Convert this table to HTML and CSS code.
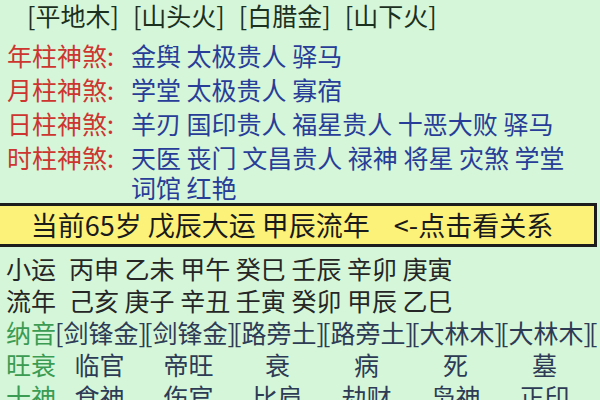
FILE: index.html
```html
<!DOCTYPE html>
<html lang="zh-CN">
<head>
<meta charset="utf-8">
<link rel="stylesheet" href="styles.css">
</head>
<body>
<div class="page">
  <div class="top-nayin">
    <span>[平地木]</span><span>[山头火]</span><span>[白腊金]</span><span>[山下火]</span>
  </div>
  <div class="shensha">
    <div class="ss-row"><span class="ss-label">年柱神煞:</span><span class="ss-vals">金舆 太极贵人 驿马</span></div>
    <div class="ss-row"><span class="ss-label">月柱神煞:</span><span class="ss-vals">学堂 太极贵人 寡宿</span></div>
    <div class="ss-row"><span class="ss-label">日柱神煞:</span><span class="ss-vals">羊刃 国印贵人 福星贵人 十恶大败 驿马</span></div>
    <div class="ss-row"><span class="ss-label">时柱神煞:</span><span class="ss-vals">天医 丧门 文昌贵人 禄神 将星 灾煞 学堂 词馆 红艳</span></div>
  </div>
  <div class="yun-bar">
    <span>当前65岁 戊辰大运 甲辰流年</span><span class="hint">&lt;-点击看关系</span>
  </div>
  <div class="lower">
    <div class="seq-row"><span class="seq-label">小运</span><span class="seq-vals">丙申 乙未 甲午 癸巳 壬辰 辛卯 庚寅</span></div>
    <div class="seq-row"><span class="seq-label">流年</span><span class="seq-vals">己亥 庚子 辛丑 壬寅 癸卯 甲辰 乙巳</span></div>
    <div class="grid-row nayin-row">
      <span class="g-label">纳音</span>
      <span class="g-left">[剑锋金]</span><span class="g-left">[剑锋金]</span><span class="g-left">[路旁土]</span><span class="g-left">[路旁土]</span><span class="g-left">[大林木]</span><span class="g-left">[大林木]</span><span class="g-left">[</span>
    </div>
    <div class="grid-row">
      <span class="g-label">旺衰</span>
      <span class="g-cell">临官</span><span class="g-cell">帝旺</span><span class="g-cell">衰</span><span class="g-cell">病</span><span class="g-cell">死</span><span class="g-cell">墓</span>
    </div>
    <div class="grid-row">
      <span class="g-label">十神</span>
      <span class="g-cell">食神</span><span class="g-cell">伤官</span><span class="g-cell">比肩</span><span class="g-cell">劫财</span><span class="g-cell">枭神</span><span class="g-cell">正印</span>
    </div>
  </div>
</div>
</body>
</html>
```

FILE: styles.css
```css
html, body {
  margin: 0;
  padding: 0;
  background: #d5f6d9;
}
.page {
  width: 600px;
  height: 400px;
  overflow: hidden;
  font-family: "Noto Sans CJK SC", "Noto Sans", sans-serif;
  font-size: 25px;
  color: #222;
  background: #d5f6d9;
}
.top-nayin {
  display: flex;
  gap: 14px;
  padding-left: 27px;
  height: 30px;
  line-height: 30px;
  color: #1c301f;
}
.shensha {
  margin-top: 10px;
  display: flex;
  flex-direction: column;
  gap: 4px;
  height: 163px;
}
.ss-row {
  display: flex;
  line-height: 30px;
}
.ss-label {
  width: 131px;
  flex: none;
  padding-left: 7px;
  box-sizing: border-box;
  color: #cc3530;
}
.ss-vals {
  width: 450px;
  color: #283d98;
}
.yun-bar {
  display: flex;
  justify-content: center;
  gap: 24px;
  width: 597px;
  height: 44px;
  line-height: 38px;
  box-sizing: border-box;
  border: 3px solid #1d1d1d;
  border-left: none;
  background: #fcf27a;
  font-size: 27px;
  color: #1a1a1a;
  padding-right: 10px;
}
.lower {
  margin-top: 5px;
}
.seq-row {
  display: flex;
  gap: 13px;
  padding-left: 6px;
  line-height: 32px;
  height: 32px;
  color: #262626;
}
.grid-row {
  display: grid;
  grid-template-columns: 55px repeat(6, 89px) 1fr;
  line-height: 32px;
  height: 32px;
  color: #2e3b55;
}
.g-label {
  padding-left: 6px;
  color: #3b9b52;
  white-space: nowrap;
}
.g-left {
  white-space: nowrap;
}
.g-cell {
  text-align: center;
  white-space: nowrap;
}
```
